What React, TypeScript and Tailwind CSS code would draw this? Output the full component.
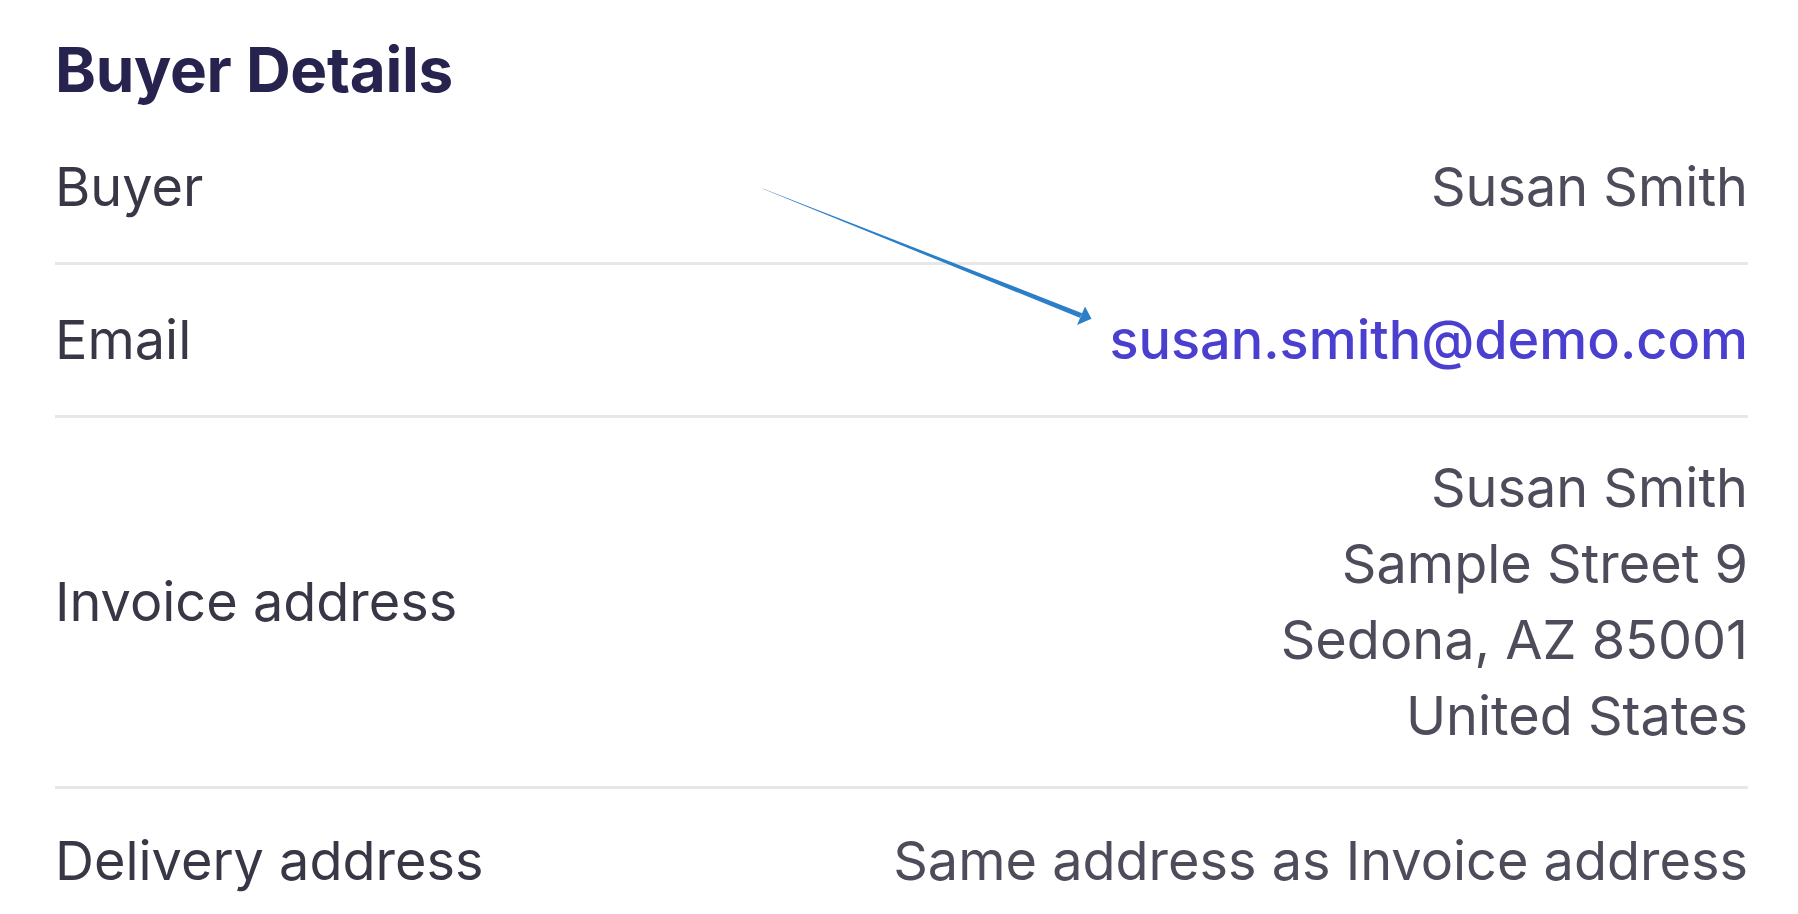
import React from 'react';

const rows = [
  { label: 'Buyer', value: ['Susan Smith'], pad: 'py-[37px]' },
  { label: 'Email', value: ['susan.smith@demo.com'], link: true, pad: 'py-[37px]' },
  {
    label: 'Invoice address',
    value: ['Susan Smith', 'Sample Street 9', 'Sedona, AZ 85001', 'United States'],
    pad: 'py-[32px]',
  },
  { label: 'Delivery address', value: ['Same address as Invoice address'], last: true, pad: 'pt-[34px] pb-[37px]' },
];

function Arrow() {
  // annotation arrow drawn over the card
  return (
    <svg className="pointer-events-none absolute inset-0" width="1798" height="914" viewBox="0 0 1798 914">
      <polygon points="762,188.6 764,188.9 1082.2,313.2 1079.8,317.8" fill="#2b7fc8" />
      <polygon points="1085,306.5 1091.5,318.8 1077,325" fill="#2b7fc8" />
    </svg>
  );
}

export default function App() {
  return (
    <div className="relative min-h-screen w-full bg-white" style={{ fontFamily: 'Inter, "Noto Sans", sans-serif' }}>
      <div className="pl-[55px] pr-[50px] pt-[28px]">
        <h2 className="text-[62px] font-bold leading-[84px] text-[#27234f] tracking-[-0.3px]">Buyer Details</h2>
        <div className="flex flex-col">
          {rows.map((row) => (
            <div
              key={row.label}
              className={`flex items-center justify-between ${row.pad} ${row.last ? '' : 'border-b-[3px] border-[#e7e7e7]'}`}
            >
              <div className="text-[54px] leading-[76px] text-[#383746]">{row.label}</div>
              <div className="flex flex-col items-end text-right">
                {row.value.map((line) => (
                  <span
                    key={line}
                    className={`text-[54px] leading-[76px] ${row.link ? 'font-medium text-[#4a3fcf]' : 'text-[#4d4c5a]'}`}
                  >
                    {line}
                  </span>
                ))}
              </div>
            </div>
          ))}
        </div>
      </div>
      <Arrow />
    </div>
  );
}
